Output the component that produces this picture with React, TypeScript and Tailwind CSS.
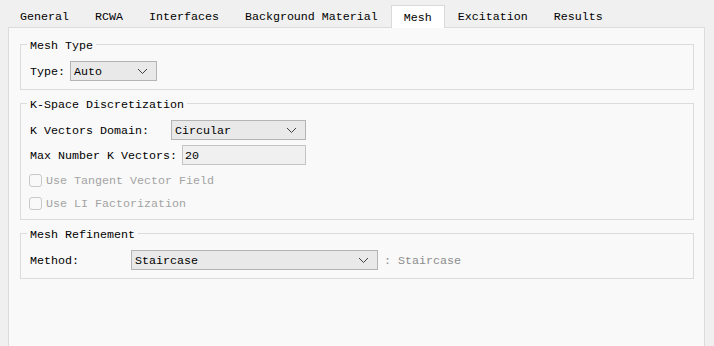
import React from "react";

const Chevron = () => (
  <svg width="11" height="7" viewBox="0 0 11 7" className="shrink-0">
    <polyline points="1,1 5.5,5.5 10,1" fill="none" stroke="#404040" strokeWidth="1" />
  </svg>
);

const Combo = ({ value, w }: { value: string; w: string }) => (
  <div className={`${w} h-[20px] flex items-center justify-between pl-[3px] pr-[8px] bg-[#e9e9e9] border border-[#b4b4b4]`}>
    <span className="pt-[1px]">{value}</span>
    <Chevron />
  </div>
);

const Group = ({ title, children, className }: { title: string; children: React.ReactNode; className?: string }) => (
  <fieldset className={`border border-[#dcdcdc] px-[6px] pt-[9px] pb-[8px] ${className ?? ""}`}>
    <legend className="px-[3px] h-[15px] flex items-center pt-[3px]">{title}</legend>
    <div className="pl-[3px]">{children}</div>
  </fieldset>
);

const CheckRow = ({ label }: { label: string }) => (
  <div className="h-[23px] flex items-center ml-[-1px]">
    <div className="w-[13px] h-[13px] rounded-[3px] border border-[#c8c8c8] bg-[#f9f9f9]" />
    <span className="ml-[4px] pt-[1px] text-[#a3a3a3]">{label}</span>
  </div>
);

export default function App() {
  const tabs = ["General", "RCWA", "Interfaces", "Background Material", "Mesh", "Excitation", "Results"];
  return (
    <div className="w-[714px] h-[346px] bg-[#f0f0f0] flex flex-col overflow-hidden text-black font-['Liberation_Mono',monospace] text-[11.67px] leading-[14px]">
      <div className="h-[27px] pt-[5px] pl-[7px] flex items-start relative z-10">
        {tabs.map((t) =>
          t === "Mesh" ? (
            <div key={t} className="h-[23px] px-[12px] pt-[2px] flex items-center bg-white border border-b-0 border-[#d9d9d9] whitespace-pre">
              {t}
            </div>
          ) : (
            <div key={t} className="h-[22px] px-[13px] pt-[1px] flex items-center whitespace-pre">
              {t}
            </div>
          )
        )}
      </div>
      <div className="ml-[8px] w-[697px] flex-1 bg-[#f9f9f9] border border-b-0 border-[#dcdcdc] pt-[9px] pl-[11px] pr-[10px] flex flex-col">
        <Group title="Mesh Type">
          <div className="flex items-center">
            <span className="w-[40px] pt-[1px]">Type:</span>
            <Combo value="Auto" w="w-[87px]" />
          </div>
        </Group>
        <Group title="K-Space Discretization" className="mt-[6px] !pb-[4px]">
          <div className="flex items-center">
            <span className="w-[141px] pt-[1px] whitespace-pre">K Vectors Domain:</span>
            <Combo value="Circular" w="w-[135px]" />
          </div>
          <div className="flex items-center mt-[5px]">
            <span className="w-[152px] pt-[1px] whitespace-pre">Max Number K Vectors:</span>
            <div className="w-[124px] h-[20px] flex items-center pl-[2px] pt-[1px] bg-[#f0f0f0] border border-[#c4c4c4]">20</div>
          </div>
          <div className="mt-[4px]">
            <CheckRow label="Use Tangent Vector Field" />
            <CheckRow label="Use LI Factorization" />
          </div>
        </Group>
        <Group title="Mesh Refinement" className="mt-[6px]">
          <div className="flex items-center">
            <span className="w-[101px] pt-[1px]">Method:</span>
            <Combo value="Staircase" w="w-[247px]" />
            <span className="ml-[6px] pt-[1px] text-[#8c8c8c] whitespace-pre">: Staircase</span>
          </div>
        </Group>
      </div>
    </div>
  );
}
